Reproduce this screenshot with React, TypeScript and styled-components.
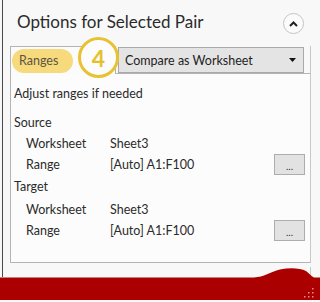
import styled, { createGlobalStyle } from 'styled-components'

const GlobalStyle = createGlobalStyle`
  html, body {
    margin: 0;
    padding: 0;
    background: #f8f8f8;
  }
  body {
    font-family: Lato, 'Liberation Sans', sans-serif;
    color: #333;
  }
`

type RowData = { label: string; value: string; pick?: boolean }

const sections: { title: string; gap: number; rows: RowData[] }[] = [
  {
    title: 'Source',
    gap: 0,
    rows: [
      { label: 'Worksheet', value: 'Sheet3' },
      { label: 'Range', value: '[Auto] A1:F100', pick: true },
    ],
  },
  {
    title: 'Target',
    gap: 1,
    rows: [
      { label: 'Worksheet', value: 'Sheet3' },
      { label: 'Range', value: '[Auto] A1:F100', pick: true },
    ],
  },
]

export default function App() {
  return (
    <Page>
      <GlobalStyle />
      <Main>
        <Header>
          <Title>Options for Selected Pair</Title>
          <CollapseButton aria-label="collapse">
            <svg width="9" height="6" viewBox="0 0 9 6">
              <path d="M1 5 L4.5 1.5 L8 5" fill="none" stroke="#222" strokeWidth="2" />
            </svg>
          </CollapseButton>
        </Header>

        <TabArea>
          <TabStrip>
            <Tab>
              <Pill>Ranges</Pill>
            </Tab>
            <ComboSlot>
              <Combo>
                <span>Compare as Worksheet</span>
                <svg width="7" height="4" viewBox="0 0 7 4">
                  <path d="M0 0 L7 0 L3.5 4 Z" fill="#111" />
                </svg>
              </Combo>
            </ComboSlot>
            <StepBadge>4</StepBadge>
          </TabStrip>

          <Panel>
            <Hint>Adjust ranges if needed</Hint>
            {sections.map((s) => (
              <Section key={s.title} gap={s.gap}>
                <SectionTitle>{s.title}</SectionTitle>
                {s.rows.map((r, i) => (
                  <Row key={r.label} first={i === 0} gap={s.gap}>
                    <Label>{r.label}</Label>
                    <Value>{r.value}</Value>
                    {r.pick && <PickButton>...</PickButton>}
                  </Row>
                ))}
              </Section>
            ))}
          </Panel>
        </TabArea>
      </Main>

      <RedBand>
        {/* torn paper edge */}
        <svg width="320" height="35" viewBox="0 0 320 35">
          <line x1="2.5" y1="0" x2="2.5" y2="10" stroke="#4a4a4a" strokeWidth="1" />
          <line x1="310.5" y1="0" x2="310.5" y2="8" stroke="#c8c8c8" strokeWidth="1" />
          <path
            d="M0 10.5 L254 10.5 C264 10 270 5 280 2.5 C290 0.5 300 1 306 4 C309 6 311 9 314 10.5 L320 10.5 L320 33 L0 33 Z"
            fill="#aa0000"
          />
          <g fill="#ef8a8a">
            <rect x="304" y="29" width="1.5" height="1.5" />
            <rect x="308" y="29" width="1.5" height="1.5" />
            <rect x="312" y="29" width="1.5" height="1.5" />
            <rect x="308" y="25" width="1.5" height="1.5" />
            <rect x="312" y="25" width="1.5" height="1.5" />
            <rect x="312" y="21" width="1.5" height="1.5" />
          </g>
        </svg>
      </RedBand>
    </Page>
  )
}

const Page = styled('div')`
  width: 320px;
  height: 302px;
  display: flex;
  flex-direction: column;
  overflow: hidden;
  background: #f8f8f8;
`

const Main = styled('div')`
  margin-left: 2px;
  height: 267px;
  border-left: 1px solid #4a4a4a;
  display: flex;
  flex-direction: column;
`

const Header = styled('div')`
  height: 46px;
  display: flex;
  align-items: flex-start;
  justify-content: space-between;
  padding: 0 16px 0 14px;
  box-sizing: border-box;
`

const Title = styled('h1')`
  margin: 0;
  padding-top: 10px;
  font-size: 17px;
  line-height: 24px;
  font-weight: 400;
  color: #2b2b2b;
`

const CollapseButton = styled('div')`
  margin-top: 13px;
  width: 19px;
  height: 19px;
  border: 1px solid #c4c4c4;
  border-radius: 50%;
  display: flex;
  align-items: center;
  justify-content: center;
  background: #fbfbfb;
`

const TabArea = styled('div')`
  margin-left: 7px;
  width: 301px;
`

const TabStrip = styled('div')`
  position: relative;
  display: flex;
  height: 28px;
`

const Tab = styled('div')`
  width: 106px;
  box-sizing: border-box;
  border: 1px solid #b4b4b4;
  border-bottom: none;
  padding: 2px 0 0 1px;
  background: #fbfbfb;
`

const Pill = styled('div')`
  width: 61px;
  height: 24px;
  border-radius: 12px;
  background: #f7da7c;
  color: #5b5444;
  font-size: 12.5px;
  line-height: 24px;
  padding-left: 7px;
  box-sizing: border-box;
`

const ComboSlot = styled('div')`
  flex: 1;
  border-bottom: 1px solid #b4b4b4;
  border-right: 1px solid #c8c8c8;
  padding: 1px 6px 0 2px;
`

const Combo = styled('div')`
  height: 26px;
  box-sizing: border-box;
  border: 1px solid #a9a9a9;
  background: #e4e4e4;
  display: flex;
  align-items: center;
  justify-content: space-between;
  padding: 0 7px 0 6px;
  font-size: 12.5px;
  color: #1e1e1e;
`

const StepBadge = styled('div')`
  position: absolute;
  left: 68px;
  top: -9px;
  width: 41px;
  height: 41px;
  box-sizing: border-box;
  border: 3px solid #e8c233;
  border-radius: 50%;
  background: #fcfcfc;
  color: #e6bf2d;
  font-weight: 700;
  font-size: 23px;
  display: flex;
  align-items: center;
  justify-content: center;
`

const Panel = styled('div')`
  height: 189px;
  box-sizing: border-box;
  border: 1px solid #b4b4b4;
  border-top: none;
  border-right-color: #c8c8c8;
  background: #fcfcfc;
  padding: 9px 5px 0 3px;
  font-size: 12.5px;
  color: #2b2b2b;
`

const Hint = styled('div')`
  line-height: 21px;
`

const Section = styled('div')<{ gap: number }>`
  margin-top: ${(p) => (p.gap ? 1 : 8)}px;
`

const SectionTitle = styled('div')`
  line-height: 21px;
`

const Row = styled('div')<{ first: boolean; gap: number }>`
  display: flex;
  align-items: center;
  height: 21px;
  padding-left: 12px;
  margin-top: ${(p) => (p.first ? p.gap * 2 : 0)}px;
`

const Label = styled('span')`
  width: 84px;
`

const Value = styled('span')`
  flex: 1;
`

const PickButton = styled('div')`
  width: 31px;
  height: 21px;
  box-sizing: border-box;
  border: 1px solid #adadad;
  background: #e2e2e2;
  font-size: 10px;
  line-height: 22px;
  text-align: center;
  color: #333;
`

const RedBand = styled('div')`
  height: 35px;
  & svg {
    display: block;
  }
`
